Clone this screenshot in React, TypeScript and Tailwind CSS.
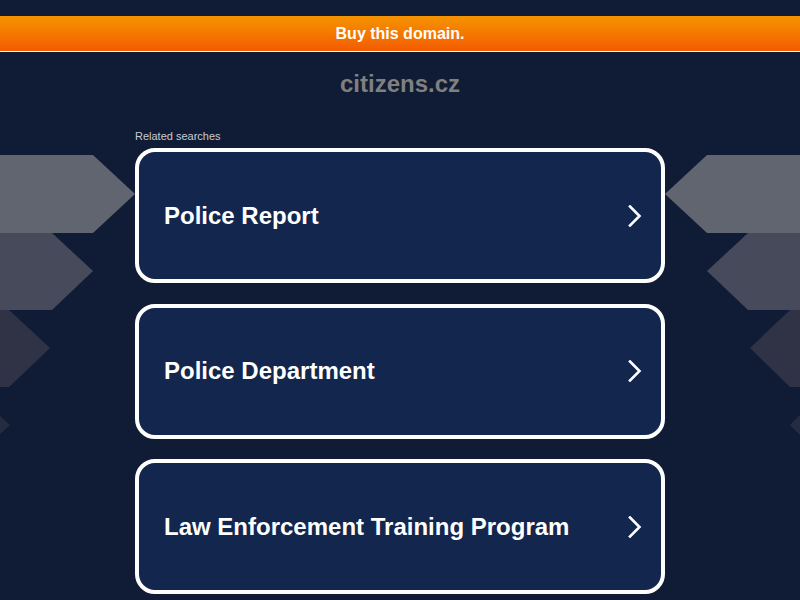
import React from "react";

const items = ["Police Report", "Police Department", "Law Enforcement Training Program"];

function Chevron() {
  return (
    <svg width="14" height="22" viewBox="0 0 14 22" className="shrink-0">
      <polyline points="2,1.5 11.5,11 2,20.5" fill="none" stroke="#ffffff" strokeWidth="2.6" strokeLinecap="square" />
    </svg>
  );
}

export default function App() {
  return (
    <div
      className="relative h-[600px] w-full overflow-hidden bg-[#101c36]"
      style={{ fontFamily: '"Liberation Sans", Arial, sans-serif' }}
    >
      <svg className="absolute inset-0 pointer-events-none" width="800" height="600" viewBox="0 0 800 600">
        <polygon points="0,155 93,155 135,194 93,233 0,233" fill="#61656f" />
        <polygon points="0,233 52,233 93,271 52,310 0,310" fill="#474a5a" />
        <polygon points="0,310 9,310 50,348 9,387 0,387" fill="#2f3345" />
        <polygon points="0,416 10,425 0,434" fill="#262c3f" />
        <polygon points="800,155 707,155 665,194 707,233 800,233" fill="#61656f" />
        <polygon points="800,233 748,233 707,271 748,310 800,310" fill="#474a5a" />
        <polygon points="800,310 790,310 750,348 790,387 800,387" fill="#2f3345" />
        <polygon points="800,415 790,425 800,435" fill="#262c3f" />
      </svg>

      <div className="relative flex flex-col items-center pt-4">
        <div className="flex h-[36px] w-full items-center justify-center border-b border-white bg-gradient-to-b from-[#f69300] to-[#f25a00]">
          <span className="text-[16px] font-bold text-white">Buy this domain.</span>
        </div>

        <div className="mt-[18px] text-[24px] font-bold leading-[28px] text-[#808080]">citizens.cz</div>

        <div className="mt-[31px] w-[530px]">
          <div className="text-[11px] leading-[14px] text-[#c8cbd2]">Related searches</div>
          <div className="mt-[5px] flex flex-col gap-[20.5px]">
            {items.map((t) => (
              <div
                key={t}
                className="flex h-[135px] items-center justify-between rounded-[20px] border-4 border-white bg-[#12264e] pl-[25px] pr-[19px]"
              >
                <span className="text-[24px] font-bold text-white">{t}</span>
                <Chevron />
              </div>
            ))}
          </div>
        </div>
      </div>
    </div>
  );
}
